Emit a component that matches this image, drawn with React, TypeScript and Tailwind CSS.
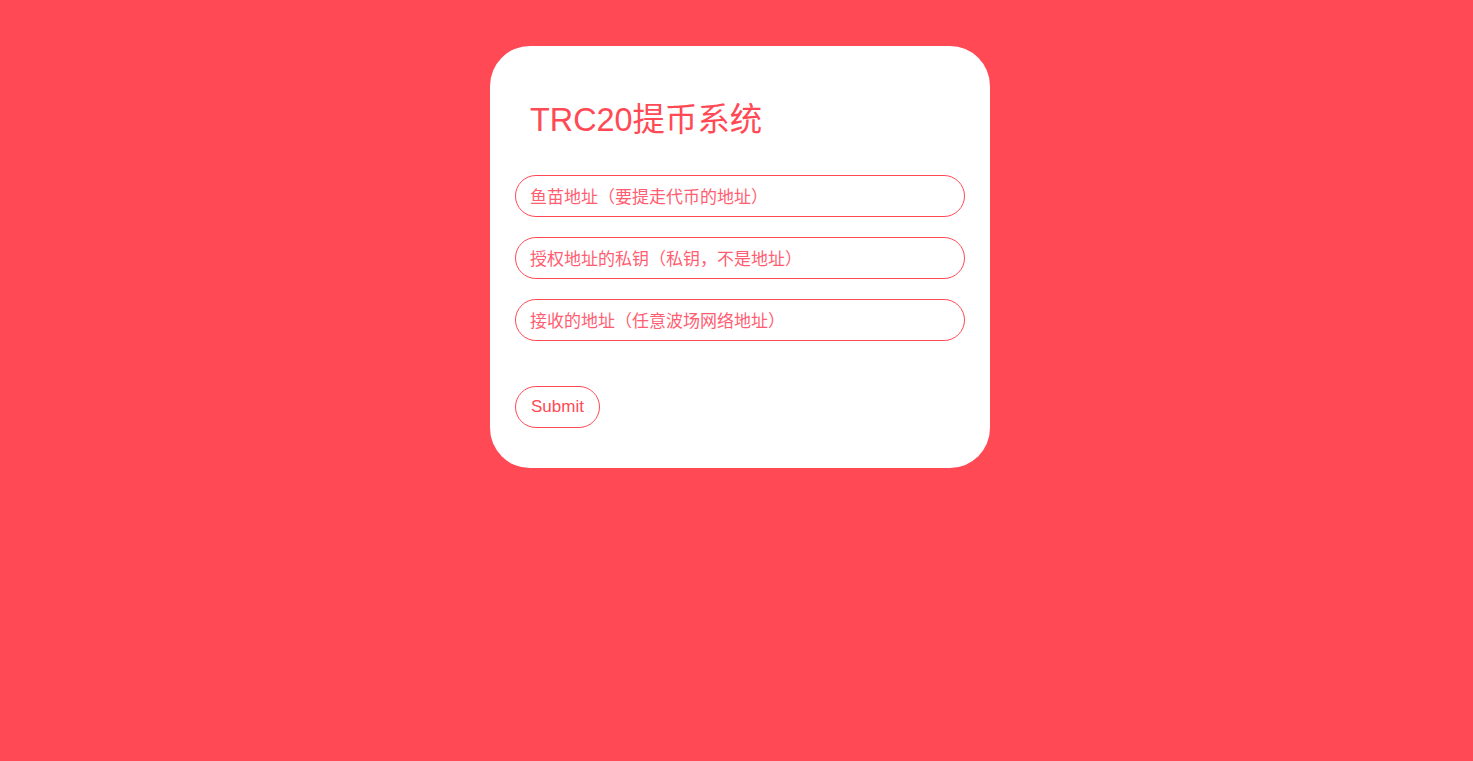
export default function App() {
  const fields = [
    '鱼苗地址（要提走代币的地址）',
    '授权地址的私钥（私钥，不是地址）',
    '接收的地址（任意波场网络地址）',
  ]
  return (
    <div
      className="min-h-screen w-full bg-[#ff4a55] pt-[46px] pl-[7px] flex justify-center items-start"
      style={{ fontFamily: '"Liberation Sans", Arial, "Noto Sans CJK SC", sans-serif' }}
    >
      <div className="w-[500px] bg-white rounded-[40px] px-[25px] pt-[56px] pb-[40px]">
        <h1 className="pl-[15px] text-[32.4px] leading-[37px] text-[#ff4a55] font-normal">TRC20提币系统</h1>
        <div className="mt-[36px] flex flex-col gap-[20px]">
          {fields.map((f) => (
            <input
              key={f}
              type="text"
              placeholder={f}
              className="w-full h-[42px] rounded-full border border-[#ff4a55] pl-[14px] pr-[14px] pt-[4px] text-[17px] text-[#ff4a55] placeholder:text-[#ff5e72] outline-none bg-white"
            />
          ))}
        </div>
        <button className="mt-[45px] h-[42px] px-[15px] rounded-full border border-[#ff4a55] text-[17px] text-[#ff4a55] bg-white">
          Submit
        </button>
      </div>
    </div>
  )
}
